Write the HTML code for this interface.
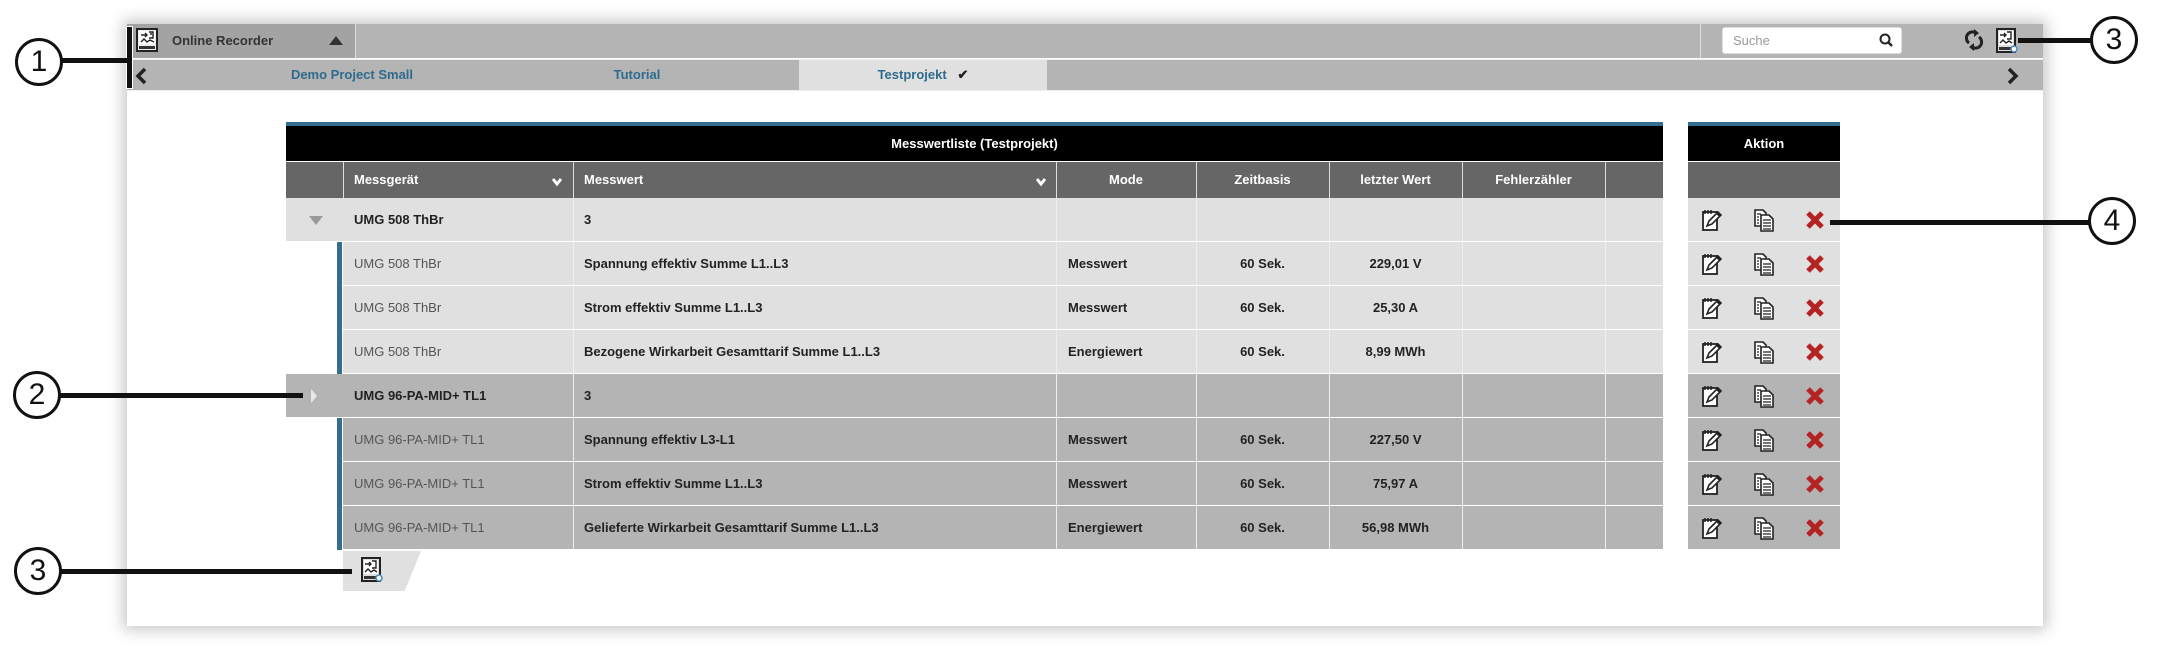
<!DOCTYPE html>
<html><head><meta charset="utf-8"><style>
*{box-sizing:border-box;margin:0;padding:0}
body{width:2160px;height:649px;background:#fff;position:relative;overflow:hidden;font-family:"Liberation Sans",Arial,sans-serif;font-size:13px}
.abs{position:absolute}
.panel{left:127px;top:24px;width:1916px;height:602px;background:#fff;box-shadow:0 0 14px 4px rgba(0,0,0,.22)}
.topbar{left:127px;top:24px;width:1916px;height:34px;background:#b4b4b4}
.rec{left:127px;top:24px;width:229px;height:34px;background:#a3a3a3;border-right:1px solid #ddd}
.tabs{left:127px;top:59px;width:1916px;height:32px;background:#b4b4b4;border-top:1px solid #eee;border-bottom:1px solid #eee}
.tab{position:absolute;top:0;height:30px;line-height:30px;color:#2f6b8c;font-weight:bold;font-size:13px;text-align:center}
.circ{position:absolute;width:48px;height:48px;border:3px solid #111;border-radius:50%;background:#fff;font-size:30px;line-height:42px;text-align:center;color:#111;font-family:"Liberation Sans Narrow","Liberation Sans",sans-serif}
.ln{position:absolute;height:5px;background:#111}
.cell{position:absolute;height:43px;line-height:43px;font-weight:bold;color:#222;padding-left:11px;white-space:nowrap;overflow:hidden}
.hd{color:#fff}
</style></head><body>
<div class="abs panel"></div>
<div class="abs topbar"></div>
<div class="abs rec"></div>
<svg class="abs" style="left:136px;top:28px" width="22" height="24" viewBox="0 0 22 24"><rect x="1" y="1" width="20" height="22" fill="#eee" stroke="#222" stroke-width="2"/><rect x="3" y="3" width="16" height="13" fill="#fff"/><path d="M5 7h6M9 5l2 2-2 2M13 4h4v6h-4M14 6h2M5 14l3-3 3 3 3-2 4 2" stroke="#222" stroke-width="1.4" fill="none"/><rect x="3" y="18" width="16" height="3" fill="#333"/></svg>
<div class="abs" style="left:172px;top:24px;line-height:34px;color:#333;font-weight:bold;font-size:13px">Online Recorder</div>
<div class="abs" style="left:329px;top:36px;width:0;height:0;border-left:7px solid transparent;border-right:7px solid transparent;border-bottom:9px solid #333"></div>
<div class="abs" style="left:1700px;top:24px;width:1px;height:34px;background:#ddd"></div>
<div class="abs" style="left:1722px;top:27px;width:180px;height:27px;background:#fff;border:1px solid #ddd;border-radius:3px;color:#999;line-height:25px;padding-left:10px;font-size:13px">Suche</div>
<svg class="abs" style="left:1878px;top:32px" width="16" height="16" viewBox="0 0 16 16"><circle cx="7" cy="7" r="4.5" stroke="#222" stroke-width="2" fill="none"/><path d="M10 10l4 4" stroke="#222" stroke-width="2.4"/></svg>
<svg class="abs" style="left:1965px;top:29px" width="18" height="22" viewBox="0 0 18 22"><path d="M4 14A6 6 0 0 1 11 4" stroke="#222" stroke-width="3" fill="none"/><path d="M9 0l5 4-5 4z" fill="#222"/><path d="M14 8A6 6 0 0 1 7 18" stroke="#222" stroke-width="3" fill="none"/><path d="M9 22l-5-4 5-4z" fill="#222"/></svg>
<svg class="abs" style="left:1996px;top:28px" width="22" height="26" viewBox="0 0 22 26"><rect x="1" y="1" width="18" height="23" fill="#ddd" stroke="#222" stroke-width="2"/><rect x="3" y="3" width="14" height="14" fill="#fff"/><path d="M4 7h6M8 5l2 2-2 2M11 4h4v7h-4M4 15l3-3 3 3 3-2 3 2" stroke="#222" stroke-width="1.4" fill="none"/><rect x="3" y="19" width="14" height="3" fill="#333"/><circle cx="18" cy="21" r="3" fill="#fff" stroke="#4a8ac0" stroke-width="1.5"/></svg>

<div class="abs tabs">
 <svg style="position:absolute;left:8px;top:7px" width="12" height="18" viewBox="0 0 12 18"><path d="M10 2L3 9l7 7" stroke="#222" stroke-width="3.5" fill="none"/></svg>
 <div class="tab" style="left:100px;width:250px">Demo Project Small</div>
 <div class="tab" style="left:410px;width:200px">Tutorial</div>
 <div class="tab" style="left:672px;width:248px;background:#e0e0e0">Testprojekt &nbsp;&nbsp;<span style="color:#222">✔</span></div>
 <svg style="position:absolute;left:1880px;top:7px" width="12" height="18" viewBox="0 0 12 18"><path d="M2 2l7 7-7 7" stroke="#222" stroke-width="3.5" fill="none"/></svg>
</div>
<div class="abs" style="left:126px;top:26px;width:7px;height:63px;background:#111;border:1px solid #fff"></div>

<div class="abs" style="left:286px;top:122px;width:1377px;height:4px;background:#336e8e"></div>
<div class="abs" style="left:286px;top:126px;width:1377px;height:35px;background:#000;color:#fff;font-weight:bold;text-align:center;line-height:35px">Messwertliste (Testprojekt)</div>
<div class="abs" style="left:286px;top:162px;width:1377px;height:36px;background:#666"></div>
<div class="abs" style="left:1688px;top:122px;width:152px;height:4px;background:#336e8e"></div>
<div class="abs" style="left:1688px;top:126px;width:152px;height:35px;background:#000;color:#fff;font-weight:bold;text-align:center;line-height:35px">Aktion</div>
<div class="abs" style="left:1688px;top:162px;width:152px;height:36px;background:#666"></div>
<div id="rows"></div>
<div class="abs" style="left:343px;top:551px;width:78px;height:40px;background:#e0e0e0;clip-path:polygon(0 0,100% 0,79% 100%,0 100%)"></div>
<svg class="abs" style="left:361px;top:557px" width="22" height="26" viewBox="0 0 22 26"><rect x="1" y="1" width="18" height="23" fill="#ddd" stroke="#222" stroke-width="2"/><rect x="3" y="3" width="14" height="14" fill="#fff"/><path d="M4 7h6M8 5l2 2-2 2M11 4h4v7h-4M4 15l3-3 3 3 3-2 3 2" stroke="#222" stroke-width="1.4" fill="none"/><rect x="3" y="19" width="14" height="3" fill="#333"/><circle cx="18" cy="21" r="3" fill="#fff" stroke="#4a8ac0" stroke-width="1.5"/></svg>

<div class="ln" style="left:60px;top:58px;width:68px"></div>
<div class="circ" style="left:15px;top:38px">1</div>
<div class="ln" style="left:2018px;top:38px;width:80px"></div>
<div class="circ" style="left:2090px;top:16px">3</div>
<div class="ln" style="left:1830px;top:220px;width:260px"></div>
<div class="circ" style="left:2088px;top:197px">4</div>
<div class="ln" style="left:60px;top:393px;width:243px"></div>
<div class="circ" style="left:13px;top:371px">2</div>
<div class="ln" style="left:60px;top:569px;width:292px"></div>
<div class="circ" style="left:14px;top:547px">3</div>

<script>
var cols=[286,343,573,1056,1196,1329,1462,1605,1663];
var hdr=["","Messgerät","Messwert","Mode","Zeitbasis","letzter Wert","Fehlerzähler",""];
var h="";
for(var i=1;i<8;i++){h+='<div class="abs" style="left:'+cols[i]+'px;top:162px;width:1px;height:36px;background:#ddd"></div>';
 var c=i>=3;h+='<div class="cell hd" style="left:'+cols[i]+'px;top:162px;width:'+(cols[i+1]-cols[i])+'px;height:36px;line-height:36px;'+(c?'text-align:center;padding-left:0':'')+'">'+hdr[i]+'</div>';}
var chev='<svg width="12" height="10" viewBox="0 0 12 10"><path d="M2 2l4 5 4-5" stroke="#fff" stroke-width="3" fill="none"/></svg>';
h+='<div class="abs" style="left:551px;top:175px">'+chev+'</div>';
h+='<div class="abs" style="left:1035px;top:175px">'+chev+'</div>';
var rows=[
[1,"UMG 508 ThBr","3","","","",0],
[0,"UMG 508 ThBr","Spannung effektiv Summe L1..L3","Messwert","60 Sek.","229,01 V",0],
[0,"UMG 508 ThBr","Strom effektiv Summe L1..L3","Messwert","60 Sek.","25,30 A",0],
[0,"UMG 508 ThBr","Bezogene Wirkarbeit Gesamttarif Summe L1..L3","Energiewert","60 Sek.","8,99 MWh",0],
[2,"UMG 96-PA-MID+ TL1","3","","","",1],
[0,"UMG 96-PA-MID+ TL1","Spannung effektiv L3-L1","Messwert","60 Sek.","227,50 V",1],
[0,"UMG 96-PA-MID+ TL1","Strom effektiv Summe L1..L3","Messwert","60 Sek.","75,97 A",1],
[0,"UMG 96-PA-MID+ TL1","Gelieferte Wirkarbeit Gesamttarif Summe L1..L3","Energiewert","60 Sek.","56,98 MWh",1]];
var edit='<svg width="22" height="24" viewBox="0 0 22 24"><rect x="2" y="4" width="14" height="18" fill="#fff" stroke="#222" stroke-width="1.8"/><path d="M4 2v4M7 2v4M10 2v4" stroke="#222" stroke-width="1.5"/><path d="M6 18l2-5 9-9 3 3-9 9z" fill="#fff" stroke="#222" stroke-width="1.6"/><path d="M16 5l3 3" stroke="#222" stroke-width="2.5"/></svg>';
var copy='<svg width="22" height="24" viewBox="0 0 22 24"><path d="M2 2h8l3 3v13H2z" fill="#fff" stroke="#222" stroke-width="1.6"/><path d="M8 7h8l4 4v12H8z" fill="#fff" stroke="#222" stroke-width="1.6"/><path d="M10 12h8M10 15h8M10 18h8M10 21h8M4 6h4M4 9h2M4 12h2M4 15h2" stroke="#222" stroke-width="1.3"/></svg>';
var del='<svg width="20" height="20" viewBox="0 0 20 20"><path d="M3 3l14 14M17 3L3 17" stroke="#b52222" stroke-width="5"/></svg>';
for(var r=0;r<8;r++){var R=rows[r],y=198+r*44,bg=R[6]?"#b4b4b4":"#e0e0e0";
 h+='<div class="abs" style="left:'+(R[0]?286:343)+'px;top:'+y+'px;width:'+(R[0]?1377:1320)+'px;height:43px;background:'+bg+'"></div>';
 if(!R[0])h+='<div class="abs" style="left:337px;top:'+y+'px;width:5px;height:44px;background:#336e8e"></div>';
 if(R[0]==1)h+='<div class="abs" style="left:309px;top:'+(y+18)+'px;border-left:7px solid transparent;border-right:7px solid transparent;border-top:9px solid #999"></div>';
 if(R[0]==2)h+='<div class="abs" style="left:311px;top:'+(y+15)+'px;border-top:7px solid transparent;border-bottom:7px solid transparent;border-left:6px solid #e8e8e8"></div>';
 for(var i=2;i<8;i++)h+='<div class="abs" style="left:'+cols[i]+'px;top:'+y+'px;width:1px;height:43px;background:#eee"></div>';
 h+='<div class="cell" style="left:343px;top:'+y+'px;width:230px;'+(R[0]?'':'font-weight:normal;color:#555')+'">'+R[1]+'</div>';
 h+='<div class="cell" style="left:573px;top:'+y+'px;width:483px">'+R[2]+'</div>';
 h+='<div class="cell" style="left:1056px;top:'+y+'px;width:140px;padding-left:12px">'+R[3]+'</div>';
 h+='<div class="cell" style="left:1196px;top:'+y+'px;width:133px;text-align:center;padding:0">'+R[4]+'</div>';
 h+='<div class="cell" style="left:1329px;top:'+y+'px;width:133px;text-align:center;padding:0">'+R[5]+'</div>';
 h+='<div class="abs" style="left:1688px;top:'+y+'px;width:152px;height:43px;background:'+bg+'"></div>';
 h+='<div class="abs" style="left:1701px;top:'+(y+10)+'px">'+edit+'</div>';
 h+='<div class="abs" style="left:1753px;top:'+(y+10)+'px">'+copy+'</div>';
 h+='<div class="abs" style="left:1805px;top:'+(y+12)+'px">'+del+'</div>';
}
document.getElementById('rows').innerHTML=h;
</script>
</body></html>
